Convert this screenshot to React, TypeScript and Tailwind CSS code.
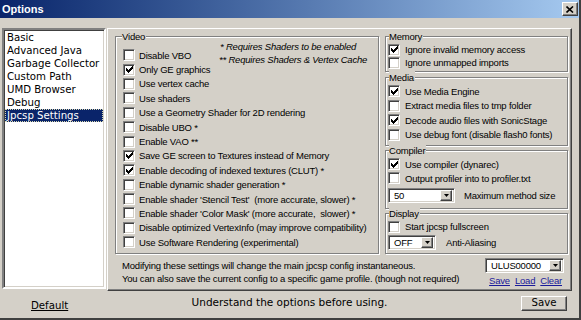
import React from "react";

const TA =
  "font-['Liberation_Sans',sans-serif] text-[9.5px] tracking-[-0.2px] leading-[13px] text-black whitespace-pre";
const VE = "font-['DejaVu_Sans',sans-serif] text-[10.2px] text-black whitespace-pre";
const VF = "font-['DejaVu_Sans',sans-serif] text-[10.5px] text-black whitespace-pre";

function CheckMark() {
  const cols = [2, 3, 4, 3, 2, 1, 0];
  return (
    <svg width="7" height="7" viewBox="0 0 7 7">
      {cols.map((y, x) => (
        <rect key={x} x={x} y={y} width="1" height="3" fill="#000" />
      ))}
    </svg>
  );
}

function Check({ checked }: { checked?: boolean }) {
  return (
    <span className="flex-none w-[12px] h-[12px] bg-white border border-t-[#808080] border-l-[#808080] border-b-white border-r-white shadow-[inset_1px_1px_0_#404040,inset_-1px_-1px_0_#d4d0c8] flex items-center justify-center">
      {checked && <CheckMark />}
    </span>
  );
}

function Row({ label, checked, h, gap }: { label: string; checked?: boolean; h: string; gap: string }) {
  return (
    <div className={`flex items-center ${h} ${gap}`}>
      <Check checked={checked} />
      <span className={TA}>{label}</span>
    </div>
  );
}

function Group({
  title,
  className,
  labelClass,
  children,
}: {
  title: string;
  className: string;
  labelClass: string;
  children: React.ReactNode;
}) {
  return (
    <div
      className={`flex flex-col border border-[#808080] shadow-[inset_1px_1px_0_#fff,1px_1px_0_#fff] ${className}`}
    >
      <span className={`${TA} -mt-[7px] self-start bg-[#d4d0c8] pr-[1px] h-[13px] ${labelClass}`}>{title}</span>
      {children}
    </div>
  );
}

function Combo({ value, w }: { value: string; w: string }) {
  return (
    <div
      className={`flex items-center bg-white border border-t-[#808080] border-l-[#808080] border-b-white border-r-white shadow-[inset_1px_1px_0_#404040,inset_-1px_-1px_0_#d4d0c8] ${w} h-[15px] pl-[5px] pr-[2px]`}
    >
      <span className={`${TA} flex-1`}>{value}</span>
      <span className="flex-none w-[12px] h-[11px] bg-[#d4d0c8] border border-t-white border-l-white border-b-[#404040] border-r-[#404040] shadow-[inset_-1px_-1px_0_#808080] flex items-center justify-center">
        <svg width="5" height="3" viewBox="0 0 5 3">
          <path d="M0 0H5L2.5 3Z" fill="#000" />
        </svg>
      </span>
    </div>
  );
}

const videoRows: [string, boolean][] = [
  ["Use vertex cache", false],
  ["Use shaders", false],
  ["Use a Geometry Shader for 2D rendering", false],
  ["Disable UBO *", false],
  ["Enable VAO **", false],
  ["Save GE screen to Textures instead of Memory", true],
  ["Enable decoding of indexed textures (CLUT) *", true],
  ["Enable dynamic shader generation *", false],
  ["Enable shader 'Stencil Test'  (more accurate, slower) *", false],
  ["Enable shader 'Color Mask' (more accurate,  slower) *", false],
  ["Disable optimized VertexInfo (may improve compatibility)", false],
  ["Use Software Rendering (experimental)", false],
];

const listItems = ["Basic", "Advanced Java", "Garbage Collector", "Custom Path", "UMD Browser", "Debug", "Jpcsp Settings"];

export default function App() {
  return (
    <div className="w-[581px] h-[320px] bg-[#d4d0c8] flex flex-col border-r-2 border-b-2 border-r-[#404040] border-b-[#404040] overflow-hidden">
      {/* Title bar */}
      <div className="h-[18px] flex-none flex items-center justify-between bg-linear-to-r from-[#0a246a] to-[#a6caf0] pl-[2px] pr-[1px]">
        <span className="font-['Liberation_Sans',sans-serif] font-bold text-[11px] leading-[13px] text-white">Options</span>
        <span className="w-[16px] h-[14px] bg-[#d4d0c8] border border-t-white border-l-white border-b-[#404040] border-r-[#404040] shadow-[inset_-1px_-1px_0_#808080] flex items-center justify-center">
          <svg width="8" height="7" viewBox="0 0 8 7">
            <path d="M0.5 0.5L7 6.5M7 0.5L0.5 6.5" stroke="#000" strokeWidth="1.6" fill="none" />
          </svg>
        </span>
      </div>

      {/* Main */}
      <div className="flex items-start mt-[10px] pl-[2px]">
        {/* List */}
        <div className="w-[104px] h-[261px] flex-none bg-white border-2 border-t-[#808080] border-l-[#808080] border-b-white border-r-white shadow-[inset_1px_1px_0_#404040,inset_-1px_-1px_0_#d4d0c8] p-[1px]">
          {listItems.map((it) =>
            it === "Jpcsp Settings" ? (
              <div
                key={it}
                className={`${VE} h-[13px] leading-[13px] pl-[2px] bg-[#0a246a] text-white outline-1 outline-dotted -outline-offset-1 outline-[#d8d8b0]`}
              >
                <span className="text-white">{it}</span>
              </div>
            ) : (
              <div key={it} className={`${VE} h-[13px] leading-[13px] pl-[2px]`}>
                {it}
              </div>
            )
          )}
        </div>

        {/* Right panel */}
        <div className="ml-[1px] w-[465px] h-[263px] flex-none border border-t-white border-l-white border-b-[#404040] border-r-[#404040] shadow-[inset_-1px_-1px_0_#808080] flex flex-col pl-[7px] pr-[3px] pt-[7px]">
          <div className="flex h-[218px]">
            {/* Video */}
            <Group title="Video" className="w-[264px] h-[218px] pl-[7px]" labelClass="-ml-[1px]">
              <div className="flex flex-col mt-[5px]">
                <div className="flex">
                  <div className="w-[97px] flex flex-col">
                    <Row label="Disable VBO" h="h-[14.4px]" gap="gap-[4px]" />
                    <Row label="Only GE graphics" checked h="h-[14.4px]" gap="gap-[4px]" />
                  </div>
                  <div className={`${TA} italic flex flex-col -mt-[8px] leading-[12.5px]`}>
                    <span>{"* Requires Shaders to be enabled"}</span>
                    <span className="-ml-[1px]">{"** Requires Shaders & Vertex Cache"}</span>
                  </div>
                </div>
                {videoRows.map(([l, c]) => (
                  <Row key={l} label={l} checked={c} h="h-[14.4px]" gap="gap-[4px]" />
                ))}
              </div>
            </Group>

            {/* Right column */}
            <div className="ml-[6px] w-[183px] flex flex-col">
              <Group title="Memory" className="h-[36px] pl-[2px]" labelClass="ml-[1px]">
                <Row label="Ignore invalid memory access" checked h="h-[13px]" gap="gap-[5px]" />
                <Row label="Ignore unmapped imports" h="h-[13px]" gap="gap-[5px]" />
              </Group>
              <Group title="Media" className="h-[69px] mt-[5px] pl-[2px]" labelClass="ml-[1px]">
                <Row label="Use Media Engine" checked h="h-[14.5px]" gap="gap-[5px]" />
                <Row label="Extract media files to tmp folder" h="h-[14.5px]" gap="gap-[5px]" />
                <Row label="Decode audio files with SonicStage" checked h="h-[14.5px]" gap="gap-[5px]" />
                <Row label="Use debug font (disable flash0 fonts)" h="h-[14.5px]" gap="gap-[5px]" />
              </Group>
              <Group title="Compiler" className="h-[59px] mt-[4px] pl-[2px]" labelClass="ml-[1px]">
                <Row label="Use compiler (dynarec)" checked h="h-[14px]" gap="gap-[5px]" />
                <Row label="Output profiler into to profiler.txt" h="h-[14px]" gap="gap-[5px]" />
                <div className="flex items-center mt-[3px]">
                  <Combo value="50" w="w-[67px]" />
                  <span className={`${TA} ml-[9px]`}>Maximum method size</span>
                </div>
              </Group>
              <Group title="Display" className="h-[41px] mt-[4px] pl-[2px]" labelClass="ml-[1px]">
                <Row label="Start jpcsp fullscreen" h="h-[13px]" gap="gap-[5px]" />
                <div className="flex items-center mt-[2px]">
                  <Combo value="OFF" w="w-[48px]" />
                  <span className={`${TA} ml-[10px]`}>Anti-Aliasing</span>
                </div>
              </Group>
            </div>
          </div>

          {/* Bottom of panel */}
          <div className="flex justify-between mt-[4px]">
            <div className={`${TA} flex flex-col ml-[7px] mt-[1px]`}>
              <span>Modifying these settings will change the main jpcsp config instantaneous.</span>
              <span>You can also save the current config to a specific game profile. (though not required)</span>
            </div>
            <div className="flex flex-col items-end mr-[4px]">
              <Combo value="ULUS00000" w="w-[79px]" />
              <div className={`${TA} flex gap-[5px] mt-[1px] mr-[2px] text-[#1a1a9a]`}>
                <span className="underline text-[#1a1a9a]">Save</span>
                <span className="underline text-[#1a1a9a]">Load</span>
                <span className="underline text-[#1a1a9a]">Clear</span>
              </div>
            </div>
          </div>
        </div>
      </div>

      {/* Footer */}
      <div className="flex items-center h-[27px] pb-[3px]">
        <div className="w-[120px] pl-[31px]">
          <span className={`${VE} underline text-[#1a1a80]`}>Default</span>
        </div>
        <div className={`${VF} flex-1 text-center`}>Understand the options before using.</div>
        <div className="w-[120px] flex justify-end pr-[12px]">
          <span
            className={`${VE} w-[46px] h-[15px] flex items-center justify-center bg-[#d4d0c8] border border-t-white border-l-white border-b-[#404040] border-r-[#404040] shadow-[inset_-1px_-1px_0_#808080]`}
          >
            Save
          </span>
        </div>
      </div>
    </div>
  );
}
